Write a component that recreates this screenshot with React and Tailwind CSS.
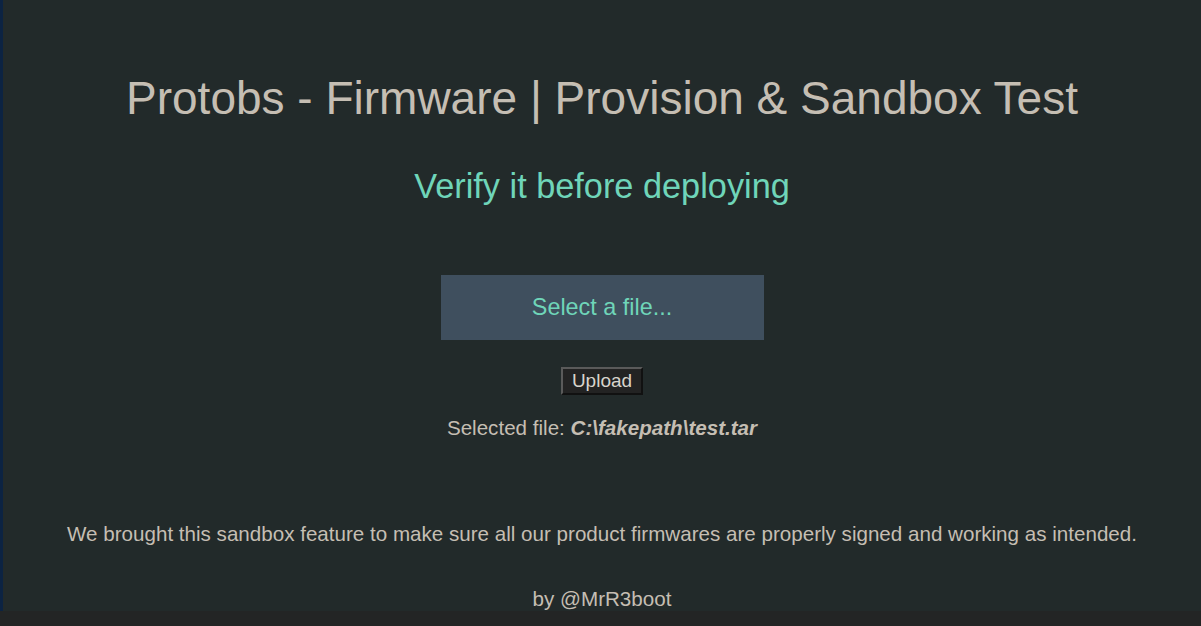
export default function App() {
  return (
    <div className="w-[1201px] h-[626px] overflow-hidden bg-[#232525] flex flex-col" style={{ fontFamily: '"Liberation Sans", Arial, sans-serif' }}>
      <div className="h-[611px] shrink-0 bg-[#222a2a] border-l-[3px] border-[#0c2342] flex flex-col items-center text-[#c5beb3]">
        <h1 className="mt-[72px] text-[46px] leading-[52px] text-[#c5beb3]">Protobs - Firmware | Provision &amp; Sandbox Test</h1>
        <h2 className="mt-[42px] text-[34.3px] leading-[40px] text-[#6fd5b9]">Verify it before deploying</h2>
        <div className="mt-[69px] w-[323px] h-[67px] bg-[#3f4f5e] flex items-center justify-center text-[23.4px] text-[#6fd5b9]">Select a file...</div>
        <button className="mt-[27px] h-[29px] px-[9px] bg-[#232323] text-[#d8d4cc] text-[19px] border-2 border-t-[#5a5a5a] border-l-[#5a5a5a] border-b-[#111] border-r-[#111] leading-none">Upload</button>
        <p className="mt-[21px] text-[20.6px] leading-[24px]">Selected file: <b><i>C:\fakepath\test.tar</i></b></p>
        <p className="mt-[82px] text-[20.6px] leading-[24px]">We brought this sandbox feature to make sure all our product firmwares are properly signed and working as intended.</p>
        <p className="mt-[41px] text-[20.6px] leading-[24px]">by @MrR3boot</p>
      </div>
    </div>
  );
}
